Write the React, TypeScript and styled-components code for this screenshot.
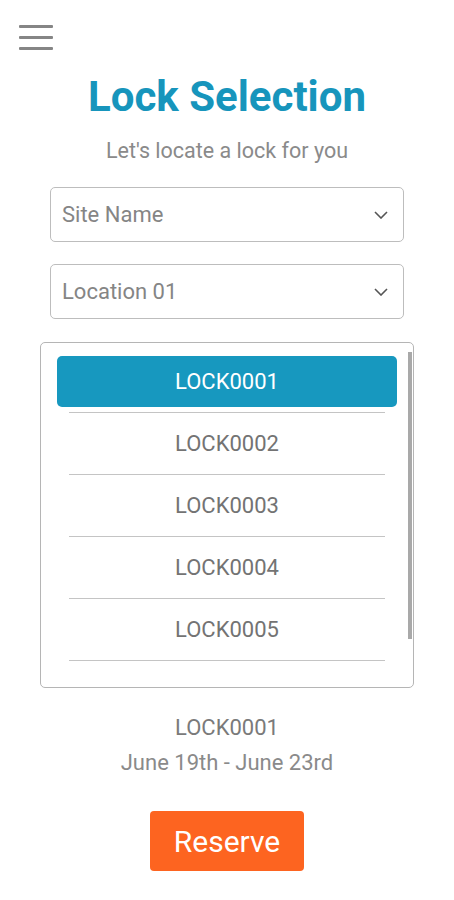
import React from "react";
import styled, { createGlobalStyle } from "styled-components";

const Global = createGlobalStyle`
  html, body { margin: 0; padding: 0; background: #ffffff; }
  body { font-family: Roboto, "Liberation Sans", Arial, sans-serif; }
  * { box-sizing: border-box; }
`;

const Page = styled.div`
  width: 454px;
  min-height: 900px;
  display: flex;
  flex-direction: column;
  align-items: center;
`;

const TopBar = styled.div`
  align-self: stretch;
  height: 62px;
  padding: 25px 0 0 19px;
`;

const Burger = styled.button`
  width: 34px;
  height: 25px;
  padding: 0;
  border: none;
  background: transparent;
  display: flex;
  flex-direction: column;
  justify-content: space-between;
  span {
    display: block;
    height: 3px;
    border-radius: 1px;
    background: #858585;
  }
`;

const Title = styled.h1`
  margin: 10px 0 0;
  font-size: 42px;
  line-height: 50px;
  font-weight: 700;
  color: #1795bc;
`;

const Subtitle = styled.p`
  margin: 16px 0 0;
  font-size: 21.5px;
  line-height: 25px;
  color: #8a8a8a;
`;

const Select = styled.div<{ $top: number }>`
  margin-top: ${(p) => p.$top}px;
  width: 354px;
  height: 55px;
  border: 1px solid #bdbdbd;
  border-radius: 5px;
  display: flex;
  align-items: center;
  justify-content: space-between;
  padding: 0 15px 0 11px;
  font-size: 22px;
  color: #858585;
`;

const ListBox = styled.div`
  position: relative;
  margin-top: 23px;
  width: 374px;
  height: 346px;
  border: 1px solid #b5b5b5;
  border-radius: 5px;
  padding-top: 8px;
  overflow: hidden;
`;

const Scrollbar = styled.div`
  position: absolute;
  right: 1px;
  top: 9px;
  width: 4px;
  height: 287px;
  background: #a9a9a9;
`;

const Item = styled.div`
  height: 62px;
  padding: 5px 16px 0;
  position: relative;
  &::after {
    content: "";
    position: absolute;
    left: 28px;
    right: 28px;
    bottom: 0;
    height: 1px;
    background: #c4c4c4;
  }
`;

const ItemLabel = styled.div<{ $selected?: boolean }>`
  height: 51px;
  border-radius: 5px;
  display: flex;
  align-items: center;
  justify-content: center;
  font-size: 22px;
  color: ${(p) => (p.$selected ? "#ffffff" : "#737373")};
  background: ${(p) => (p.$selected ? "#1798bf" : "transparent")};
`;

const Summary = styled.div`
  margin-top: 27px;
  display: flex;
  flex-direction: column;
  align-items: center;
  gap: 9px;
  font-size: 22px;
  line-height: 26px;
  color: #7a7a7a;
`;

const SummaryDate = styled.span`
  color: #8a8a8a;
`;

const ReserveButton = styled.button`
  margin-top: 35px;
  width: 154px;
  height: 60px;
  border: none;
  border-radius: 4px;
  background: #fd6420;
  color: #ffffff;
  font-family: inherit;
  font-size: 30px;
`;

const Chevron = () => (
  <svg width="14" height="8" viewBox="0 0 14 8" fill="none">
    <path d="M1 1l6 6 6-6" stroke="#555" strokeWidth="1.6" />
  </svg>
);

const locks = ["LOCK0001", "LOCK0002", "LOCK0003", "LOCK0004", "LOCK0005"];

export default function App() {
  return (
    <>
      <Global />
      <Page>
        <TopBar>
          <Burger aria-label="menu">
            <span />
            <span />
            <span />
          </Burger>
        </TopBar>
        <Title>Lock Selection</Title>
        <Subtitle>Let's locate a lock for you</Subtitle>
        <Select $top={24}>
          <span>Site Name</span>
          <Chevron />
        </Select>
        <Select $top={22}>
          <span>Location 01</span>
          <Chevron />
        </Select>
        <ListBox>
          {locks.map((l, i) => (
            <Item key={l}>
              <ItemLabel $selected={i === 0}>{l}</ItemLabel>
            </Item>
          ))}
          <Scrollbar />
        </ListBox>
        <Summary>
          <span>LOCK0001</span>
          <SummaryDate>June 19th - June 23rd</SummaryDate>
        </Summary>
        <ReserveButton>Reserve</ReserveButton>
      </Page>
    </>
  );
}
